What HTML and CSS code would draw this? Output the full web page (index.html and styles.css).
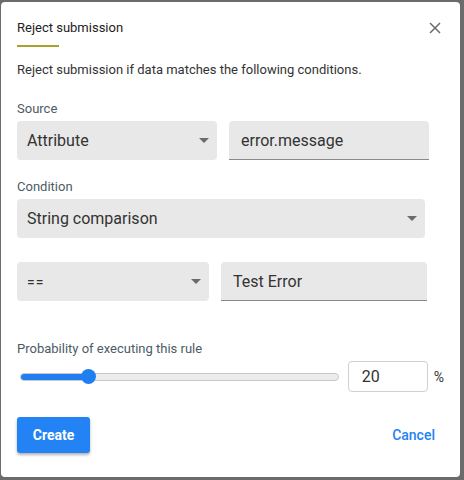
FILE: index.html
```html
<!DOCTYPE html>
<html>
<head>
<meta charset="utf-8">
<link rel="stylesheet" href="styles.css">
</head>
<body>
<div class="dialog">
  <div class="header">
    <div class="title-wrap">
      <div class="title">Reject submission</div>
      <div class="title-bar"></div>
    </div>
    <svg class="close" width="12" height="12" viewBox="0 0 12 12"><path d="M1 1L11 11M11 1L1 11" stroke="#6b6b6b" stroke-width="1.5" fill="none"/></svg>
  </div>
  <p class="desc">Reject submission if data matches the following conditions.</p>

  <div class="label">Source</div>
  <div class="row">
    <div class="select w200"><span>Attribute</span><i class="caret"></i></div>
    <div class="input w200">error.message</div>
  </div>

  <div class="label mt19">Condition</div>
  <div class="row">
    <div class="select w408"><span>String comparison</span><i class="caret"></i></div>
  </div>

  <div class="row mt24">
    <div class="select w192"><span class="eq">==</span><i class="caret"></i></div>
    <div class="input w206">Test Error</div>
  </div>

  <div class="label mt40">Probability of executing this rule</div>
  <div class="prob">
    <div class="slider">
      <div class="track"><div class="fill"></div></div>
      <div class="thumb"></div>
    </div>
    <div class="num">20</div>
    <span class="pct">%</span>
  </div>

  <div class="actions">
    <button class="create">Create</button>
    <button class="cancel">Cancel</button>
  </div>
</div>
</body>
</html>
```
FILE: styles.css
```css
html, body {
  margin: 0;
  padding: 0;
  background: #6b6b6b;
  font-family: Roboto, "Liberation Sans", sans-serif;
}
.dialog {
  margin: 2px 0 0 1px;
  width: 459px;
  height: 475px;
  background: #fff;
  border-radius: 4px;
  box-sizing: border-box;
  padding: 0 16px;
  display: flex;
  flex-direction: column;
}
.header {
  display: flex;
  justify-content: space-between;
  align-items: flex-start;
  padding-top: 18px;
}
.title {
  font-size: 13px;
  line-height: 16px;
  font-weight: 400;
  color: #222;
}
.title-bar {
  margin-top: 9px;
  width: 42px;
  height: 2px;
  background: #a6a22a;
}
.close {
  margin: 2px 3px 0 0;
}
.desc {
  margin: 15px 0 0;
  font-size: 13px;
  line-height: 16px;
  color: #333;
}
.label {
  margin-top: 23px;
  font-size: 13px;
  line-height: 15px;
  font-weight: 400;
  color: #4b5b66;
}
.mt19 { margin-top: 19px; }
.mt40 { margin-top: 40px; }
.mt24 { margin-top: 24px; }
.label + .row { margin-top: 5px; }
.row {
  display: flex;
  gap: 12px;
}
.select, .input {
  height: 39px;
  box-sizing: border-box;
  background: #e8e8e8;
  display: flex;
  align-items: center;
  font-size: 16px;
  color: #333;
}
.select {
  border-radius: 4px;
  padding: 0 8px 0 10px;
  justify-content: space-between;
}
.input {
  border-radius: 4px 4px 0 0;
  border-bottom: 1px solid #8a8a8a;
  padding: 0 12px;
}
.eq { letter-spacing: 1px; font-size: 14px; }
.caret {
  width: 0;
  height: 0;
  border-left: 5px solid transparent;
  border-right: 5px solid transparent;
  border-top: 5px solid #6b6b6b;
}
.w200 { width: 200px; }
.w408 { width: 408px; }
.w192 { width: 192px; }
.w206 { width: 206px; }
.prob {
  margin-top: 5px;
  display: flex;
  align-items: center;
}
.slider {
  position: relative;
  width: 319px;
  height: 31px;
  margin-left: 3px;
  display: flex;
  align-items: center;
}
.track {
  width: 100%;
  height: 8px;
  box-sizing: border-box;
  border: 1px solid #c8c8c8;
  background: #ececec;
  border-radius: 4px;
  overflow: hidden;
}
.fill {
  width: 68px;
  height: 100%;
  background: #1f7ff0;
}
.thumb {
  position: absolute;
  left: 61px;
  top: 8px;
  width: 15px;
  height: 15px;
  border-radius: 50%;
  background: #1f7ff0;
}
.num {
  margin-left: 9px;
  width: 80px;
  height: 31px;
  box-sizing: border-box;
  border: 1px solid #cfcfcf;
  border-radius: 4px;
  padding-left: 13px;
  display: flex;
  align-items: center;
  font-size: 16px;
  color: #333;
}
.pct {
  margin-left: 6px;
  font-size: 14px;
  color: #333;
}
.actions {
  margin-top: 25px;
  display: flex;
  justify-content: space-between;
  align-items: center;
}
button {
  font-family: Roboto, "Liberation Sans", sans-serif;
  font-size: 14px;
  font-weight: 700;
  border: none;
  cursor: pointer;
}
.create {
  width: 73px;
  height: 36px;
  background: #2383f5;
  color: #fff;
  border-radius: 3px;
  box-shadow: 0 2px 3px rgba(0,0,0,0.3);
}
.cancel {
  background: none;
  color: #2383f5;
  font-weight: 500;
  padding: 0;
  margin-right: 9px;
}
```
